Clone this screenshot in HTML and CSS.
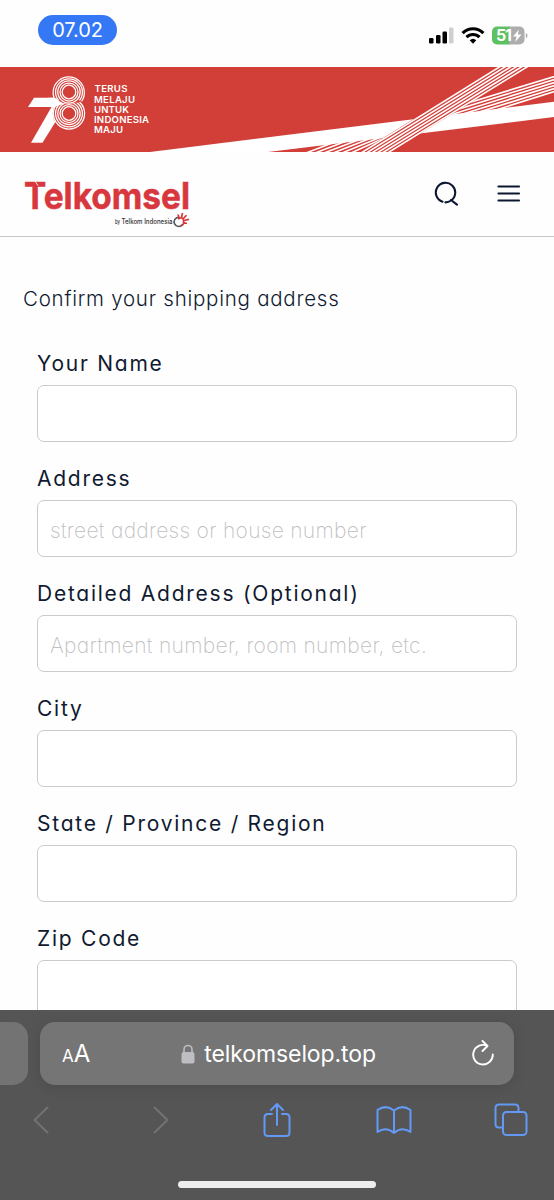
FILE: index.html
```html
<!DOCTYPE html>
<html lang="en">
<head>
<meta charset="utf-8">
<title>Shipping address</title>
<link rel="stylesheet" href="styles.css">
</head>
<body>
<div class="screen">
  <div class="status">
    <span class="time">07.02</span>
    <svg class="indicators" width="102" height="24" viewBox="0 0 102 24">
      <rect x="2" y="14" width="4.5" height="5.5" rx="1.3"/>
      <rect x="9" y="11" width="4.5" height="8.5" rx="1.3"/>
      <rect x="15.500" y="7.500" width="4.500" height="12" rx="1.3"/>
      <rect x="22" y="3.500" width="4.500" height="16" rx="1.3" fill="#cfcfcf"/>
      <g fill="none" stroke="#000" stroke-width="3.100">
        <path d="M35.600 9.200a14.500 14.500 0 0 1 20.800 0"/>
        <path d="M39.500 13.200a9.200 9.200 0 0 1 13 0"/>
      </g>
      <path d="M42.700 16.200a4.800 4.800 0 0 1 6.600 0L46 19.700z"/>
      <path d="M70 2.500h13v18H70a5 5 0 0 1-5-5v-8a5 5 0 0 1 5-5z" fill="#5cc15e"/>
      <path d="M82 2.500h10.500a5 5 0 0 1 5 5v8a5 5 0 0 1-5 5H82z" fill="#adadad"/>
      <path d="M98.800 9v5.200c2.200-.8 2.200-4.400 0-5.200z" fill="#adadad"/>
      <text class="battery" x="69" y="17.300" textLength="16">51</text>
      <path d="M92 5.500l-6 7h3.600l-1.500 5.500 6.500-7.400h-3.800z" fill="#fff"/>
    </svg>
  </div>
  <svg class="banner" width="554" height="85" viewBox="0 0 554 85">
    <rect width="554" height="85" fill="#d23e38"/>
    <g stroke="#fff" stroke-width="1.600" fill="none">
      <path d="M450 41.500L560 7.700M450 44.700L560 10.700M450 47.900L560 13.700M450 51.100L560 16.700M450 54.300L560 19.700M450 57.500L560 22.700"/>
      <path d="M306 86l50-19M315 86l50-19M324 86l50-19M333 86l46-18M342 86l44-18M351 86l42-19"/>
    </g>
    <path d="M150 85L554 34.700v15.300L268 85z" fill="#fff"/>
    <path d="M359 86L499 -1h31L389 86z" fill="#d23e38"/>
    <path d="M361 86L501 -1M366.300 86L506.500 -1M371.600 86L512 -1M376.900 86L517.500 -1M382.200 86L523 -1M387.500 86L528.500 -1" stroke="#fff" stroke-width="1.600"/>
    <g fill="#fff"><path d="M34 30.700h22l8 9.300H28z"/><path d="M51.500 40L31 75.700h11.500L56 54l-2-14z"/></g>
    <circle cx="69" cy="46.500" r="16.200" fill="#d23e38"/>
    <g fill="none" stroke="#fff" stroke-width="1.250">
      <circle cx="69" cy="46.500" r="15.600"/><circle cx="69" cy="46.500" r="13.400"/><circle cx="69" cy="46.500" r="11.200"/><circle cx="69" cy="46.500" r="9"/><circle cx="69" cy="46.500" r="6.800"/>
    </g>
    <path d="M69 8.800a16.200 16.200 0 0 1 13 26L69 37l-13-2.500A16.200 16.200 0 0 1 69 8.800z" fill="#d23e38"/>
    <g fill="none" stroke="#fff" stroke-width="1.250">
      <path d="M56 34.500A15.600 15.600 0 1 1 81.500 34.500M58.500 33.500A13.400 13.400 0 1 1 79.500 33.500"/>
      <circle cx="69" cy="25" r="11.200"/><circle cx="69" cy="25" r="9"/><circle cx="69" cy="25" r="6.800"/>
    </g>
    <path d="M48 30.700h7l9 6.500q-5 0-9 2.800h-7z" fill="#fff"/>
    <g class="slogan">
      <text x="94.500" y="25.300" textLength="33">TERUS</text>
      <text x="94" y="35.500" textLength="41">MELAJU</text>
      <text x="94" y="45.700" textLength="35">UNTUK</text>
      <text x="94" y="55.900" textLength="55">INDONESIA</text>
      <text x="94" y="66.100" textLength="29">MAJU</text>
    </g>
  </svg>
  <header class="site-header">
    <svg class="logo" width="200" height="60" viewBox="0 0 200 60">
      <text class="brand" x="4" y="44.700" textLength="166" lengthAdjust="spacingAndGlyphs">Telkomsel</text>
      <path d="M14.500 16.500l3.500 5" stroke="#fefefe" stroke-width=".9"/>
      <text class="byline by" x="95" y="60" textLength="5" lengthAdjust="spacingAndGlyphs">by</text>
      <text class="byline" x="101.500" y="60" textLength="51" lengthAdjust="spacingAndGlyphs">Telkom Indonesia</text>
      <path d="M162.500 60.500a4.600 4.600 0 1 1-3.500-7.200" fill="none" stroke="#555" stroke-width="1.600"/>
      <path d="M159.500 54.500l-1.500-4M161.500 53.500l1-4.500M163.500 54.500l3-3.300M164 56.500l5-1.200M163.500 58.500l3.500 1M158 55q5-3 5.500 1.500t-2 5" fill="none" stroke="#d7373d" stroke-width="1.700"/>
    </svg>
    <div class="actions">
      <svg width="26" height="26" viewBox="0 0 26 26" fill="none" stroke="#0b1631" stroke-width="2.100" stroke-linecap="round">
        <path d="M8.500 20.700A9.700 9.700 0 1 1 17 19.500Q14.500 21.300 11.500 21.400M17 19l6 4.700"/>
      </svg>
      <svg width="24" height="20" viewBox="0 0 24 20" stroke="#0b1631" stroke-width="2.200" stroke-linecap="round">
        <path d="M1.500 2.500h20.500M1.500 9.500h20.500M1.500 16.500h20.500"/>
      </svg>
    </div>
  </header>
  <main class="content">
    <h1 class="title">Confirm your shipping address</h1>
    <div class="fields">
      <label class="field"><span>Your Name</span><input type="text"></label>
      <label class="field"><span>Address</span><input type="text" placeholder="street address or house number"></label>
      <label class="field"><span>Detailed Address (Optional)</span><input type="text" placeholder="Apartment number, room number, etc."></label>
      <label class="field"><span>City</span><input type="text"></label>
      <label class="field"><span>State / Province / Region</span><input type="text"></label>
      <label class="field"><span>Zip Code</span><input type="text"></label>
    </div>
  </main>
  <footer class="browser">
    <div class="tabs">
      <div class="tab-prev"></div>
      <div class="address-bar">
        <span class="text-size"><small>A</small>A</span>
        <span class="domain">
          <svg width="14" height="20" viewBox="0 0 14 20"><rect x=".5" y="8" width="13" height="11.500" rx="2" fill="#bdbdc2"/><path d="M3 9V5.500a4 4 0 0 1 8 0V9" fill="none" stroke="#bdbdc2" stroke-width="1.600"/></svg>
          <span class="host">telkomselop.top</span>
        </span>
        <svg width="24" height="28" viewBox="0 0 24 28" fill="none" stroke="#fff" stroke-width="1.900" stroke-linecap="round" stroke-linejoin="round"><path d="M16.500 6A9.800 9.800 0 1 0 21.800 14.500M11.500 1l5 5-5 5"/></svg>
      </div>
    </div>
    <nav class="toolbar">
      <svg width="16" height="28" viewBox="0 0 16 28" class="off"><path d="M14.500 1.500L1.500 14l13 12.500"/></svg>
      <svg width="16" height="28" viewBox="0 0 16 28" class="off forward"><path d="M1.500 1.500L14.500 14l-13 12.500"/></svg>
      <svg width="28" height="36" viewBox="0 0 28 36" class="share"><path d="M9 12H5q-3.500 0-3.500 3.500v15Q1.500 34 5 34h18q3.500 0 3.500-3.500v-15Q26.500 12 23 12h-4M14 23V2M8 8l6-6 6 6"/></svg>
      <svg width="36" height="30" viewBox="0 0 36 30" class="book"><path d="M18 5.500Q10-1 1.500 5v22Q10 21 18 28q8-7 16.500-1V5Q26-1 18 5.500V28"/></svg>
      <svg width="34" height="34" viewBox="0 0 34 34" class="pages"><path d="M9 24.500H5q-3.500 0-3.500-3.500V5Q1.500 1.500 5 1.500h16q3.500 0 3.500 3.500v4"/><rect x="9" y="9" width="23.500" height="23" rx="3.500"/></svg>
    </nav>
    <div class="home"></div>
  </footer>
</div>
</body>
</html>
```
FILE: styles.css
```css
* { box-sizing: border-box; }
body { margin: 0; background: #fff; font-family: Inter, "Liberation Sans", sans-serif; }
.screen { width: 554px; height: 1200px; display: flex; flex-direction: column; overflow: hidden; background: #fefefe; }

.status { height: 67px; flex: none; display: flex; justify-content: space-between; align-items: flex-start; padding: 15px 25px 0 38px; }
.time { width: 79px; height: 30px; border-radius: 15px; background: #3478f6; color: #fff; font-size: 20px; line-height: 31px; text-align: center; letter-spacing: -0.1px; }
.indicators { margin-top: 9px; }
.battery { fill: #fff; font-size: 16px; font-weight: 700; }

.banner { display: block; flex: none; }
.slogan { fill: #fff; font-size: 9.6px; font-weight: 600; }

.site-header { height: 85px; flex: none; display: flex; justify-content: space-between; align-items: flex-start; padding: 12px 33px 0 20px; border-bottom: 1px solid #c2c5c9; }
.logo { overflow: visible; }
.brand { font-size: 37px; font-weight: 700; fill: #d7373d; stroke: #d7373d; stroke-width: 0.5px; }
.byline { font-size: 7px; fill: #333; font-weight: 500; }
.byline.by { font-size: 6px; }
.actions { display: flex; align-items: center; gap: 37px; padding-top: 17px; }

.content { flex: 1; min-height: 0; overflow: hidden; padding: 45px 37px 0; color: #101a30; font-feature-settings: "cv11"; }
.title { margin: 0 0 30px -14px; font-size: 20.5px; font-weight: 300; line-height: 34px; letter-spacing: 0.75px; white-space: nowrap; }
.fields { display: flex; flex-direction: column; gap: 21px; }
.field { display: flex; flex-direction: column; height: 94px; font-size: 21px; font-weight: 400; line-height: 36px; letter-spacing: 1.75px; }
.field span { height: 39px; flex: none; white-space: nowrap; }
.field input { height: 57px; flex: none; width: 480px; border: 1.5px solid #cbcbcd; border-radius: 7px; background: #fff; padding: 3px 12px 0; font: 200 21px Inter, sans-serif; letter-spacing: 0.3px; font-feature-settings: "cv11"; outline: 0; }
.field input::placeholder { color: #bfbfc3; opacity: 1; }

.browser { height: 190px; flex: none; background: #555556; display: flex; flex-direction: column; align-items: center; }
.tabs { width: 554px; height: 92px; display: flex; gap: 12px; padding-top: 12px; }
.tab-prev { width: 28px; height: 63px; background: #737373; border-radius: 0 15px 15px 0; }
.address-bar { width: 474px; height: 63px; background: #757575; border-radius: 15px; display: flex; align-items: center; justify-content: space-between; padding: 0 19px 0 22px; color: #fff; box-shadow: 0 2px 14px rgba(0, 0, 0, 0.12); }
.text-size { font-size: 24px; }
.text-size small { font-size: 17px; }
.domain { display: flex; align-items: center; gap: 9px; margin-right: 4px; }
.host { font-size: 23px; letter-spacing: -0.1px; }
.toolbar { width: 554px; height: 36px; display: flex; align-items: center; padding-left: 33px; fill: none; stroke: #6399f5; stroke-width: 2; stroke-linecap: round; stroke-linejoin: round; }
.toolbar .off { stroke: #737375; }
.forward { margin-left: 104px; }
.share { margin-left: 94px; }
.book { margin-left: 85px; }
.pages { margin-left: 82px; }
.home { width: 198px; height: 7px; border-radius: 4px; background: #eee; margin-top: 43px; }
```
